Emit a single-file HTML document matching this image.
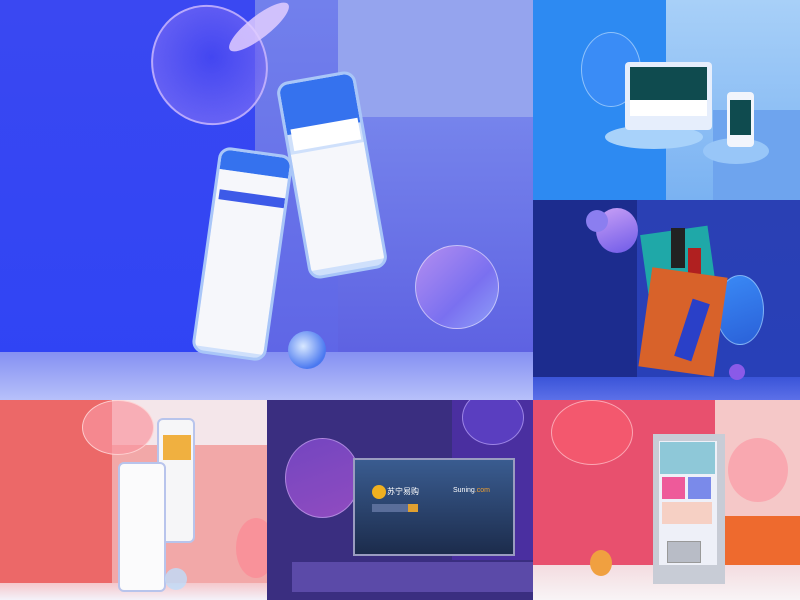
<!DOCTYPE html>
<html><head><meta charset="utf-8"><style>
*{margin:0;padding:0;box-sizing:border-box}
body{width:800px;height:600px;overflow:hidden;position:relative;font-family:"Liberation Sans","Noto Sans CJK SC",sans-serif;background:#fff}
div{position:absolute}
.p{overflow:hidden}
.disc{border-radius:50%}
</style></head><body>

<!-- Panel 1: top-left -->
<div class="p" style="left:0;top:0;width:533px;height:400px;background:linear-gradient(180deg,#3a48f2,#2f44f4)">
  <div style="left:255px;top:0;width:278px;height:352px;background:linear-gradient(180deg,#7280ec,#5f66e6)"></div>
  <div style="left:338px;top:0;width:195px;height:117px;background:#95a4ee"></div>
  <div style="left:338px;top:117px;width:195px;height:235px;background:linear-gradient(180deg,#7684ec,#5e62e2)"></div>
  <div style="left:0;top:352px;width:533px;height:48px;background:linear-gradient(180deg,#8590f2,#b7c0fa)"></div>
  <div class="disc" style="left:152px;top:4px;width:115px;height:122px;background:radial-gradient(circle at 55% 45%,rgba(70,70,240,.8),rgba(140,120,245,.6) 80%);border:2px solid rgba(220,200,255,.7);transform:rotate(-30deg)"></div>
  <div class="disc" style="left:222px;top:16px;width:74px;height:22px;background:rgba(225,205,255,.85);transform:rotate(-38deg)"></div>
  <div class="disc" style="left:415px;top:245px;width:84px;height:84px;background:linear-gradient(135deg,#b48ef0,#7a70f0 60%,#8fa0f8);border:1px solid rgba(255,255,255,.5)"></div>
  <div class="disc" style="left:288px;top:331px;width:38px;height:38px;background:radial-gradient(circle at 40% 40%,#d8e8ff,#4a78f0 70%);"></div>
  <!-- phone 2 -->
  <div style="left:292px;top:75px;width:80px;height:200px;background:#cfe0fb;border-radius:12px;transform:rotate(-10deg);border:3px solid #a9c6f8;overflow:hidden">
    <div style="left:0;top:0;width:100%;height:50px;background:#3572ee"></div>
    <div style="left:4px;top:45px;width:68px;height:22px;background:#fff"></div>
    <div style="left:0;top:70px;width:100%;height:118px;background:#f6f7fb"></div>
  </div>
  <!-- phone 1 -->
  <div style="left:205px;top:150px;width:75px;height:208px;background:#cfe0fb;border-radius:12px;transform:rotate(8deg);border:3px solid #a9c6f8;overflow:hidden">
    <div style="left:0;top:0;width:100%;height:20px;background:#3572ee"></div>
    <div style="left:0;top:20px;width:100%;height:178px;background:#f6f7fb"></div>
    <div style="left:3px;top:40px;width:66px;height:10px;background:#3d5ae8"></div>
  </div>
</div>

<!-- Panel 2: top-right upper -->
<div class="p" style="left:533px;top:0;width:267px;height:200px;background:#2d8af2">
  <div style="left:133px;top:0;width:134px;height:200px;background:linear-gradient(180deg,#a8d0f8,#7ab2f2)"></div>
  <div style="left:180px;top:110px;width:87px;height:90px;background:#6ea4ee"></div>
  <div class="disc" style="left:48px;top:32px;width:60px;height:75px;background:#3a8cf6;border:1px solid rgba(200,230,255,.6)"></div>
  <div class="disc" style="left:72px;top:125px;width:98px;height:24px;background:#a8d2fa"></div>
  <div class="disc" style="left:170px;top:138px;width:66px;height:26px;background:#98c6f8"></div>
  <div style="left:92px;top:62px;width:87px;height:68px;background:#e6eefc;border-radius:4px"></div>
  <div style="left:97px;top:67px;width:77px;height:40px;background:#0f4b4f"></div>
  <div style="left:97px;top:100px;width:77px;height:16px;background:#fff"></div>
  <div style="left:194px;top:92px;width:27px;height:55px;background:#f2f5fc;border-radius:4px"></div>
  <div style="left:197px;top:100px;width:21px;height:35px;background:#0f4b4f"></div>
</div>

<!-- Panel 3: top-right lower -->
<div class="p" style="left:533px;top:200px;width:267px;height:200px;background:#1c2c8e">
  <div style="left:104px;top:0;width:163px;height:178px;background:linear-gradient(180deg,#2a40b4,#2840b8)"></div>
  <div style="left:0;top:177px;width:267px;height:23px;background:linear-gradient(180deg,#3a54d8,#5c70e8)"></div>
  <div class="disc" style="left:183px;top:75px;width:48px;height:70px;background:linear-gradient(160deg,#3a8af6,#2a60d8);border:1px solid rgba(180,220,255,.6)"></div>
  <div class="disc" style="left:63px;top:8px;width:42px;height:45px;background:linear-gradient(160deg,#c9a0f6,#6e5ae8)"></div>
  <div class="disc" style="left:53px;top:10px;width:22px;height:22px;background:#8b7ef0"></div>
  <div style="left:112px;top:30px;width:68px;height:75px;background:#1fa8a8;transform:rotate(-8deg)"></div>
  <div style="left:138px;top:28px;width:14px;height:40px;background:#222"></div>
  <div style="left:155px;top:48px;width:13px;height:30px;background:#b02020"></div>
  <div style="left:112px;top:72px;width:76px;height:100px;background:#d8622a;transform:rotate(8deg)"></div>
  <div style="left:150px;top:100px;width:18px;height:60px;background:#2a40c8;transform:rotate(18deg)"></div>
  <div class="disc" style="left:196px;top:164px;width:16px;height:16px;background:#8a5ae8"></div>
</div>

<!-- Panel 4: bottom-left -->
<div class="p" style="left:0;top:400px;width:267px;height:200px;background:#ec6868">
  <div style="left:112px;top:0;width:155px;height:45px;background:#f4e6ea"></div>
  <div style="left:112px;top:45px;width:155px;height:140px;background:#f2a8a8"></div>
  <div style="left:0;top:183px;width:267px;height:17px;background:linear-gradient(180deg,#f5c8cc,#f4f2fa)"></div>
  <div class="disc" style="left:82px;top:0;width:72px;height:55px;background:rgba(250,150,160,.7);border:1px solid rgba(255,220,220,.8)"></div>
  <div class="disc" style="left:236px;top:118px;width:40px;height:60px;background:rgba(250,140,150,.8)"></div>
  <div style="left:157px;top:18px;width:38px;height:125px;background:#f6f6f8;border:2px solid #b8c4ec;border-radius:6px"></div>
  <div style="left:163px;top:35px;width:28px;height:25px;background:#f0b040"></div>
  <div style="left:118px;top:62px;width:48px;height:130px;background:#fbfbfc;border:2px solid #b8c4ec;border-radius:6px"></div>
  <div class="disc" style="left:165px;top:168px;width:22px;height:22px;background:rgba(190,220,250,.8)"></div>
</div>

<!-- Panel 5: bottom-middle -->
<div class="p" style="left:267px;top:400px;width:266px;height:200px;background:#3a2e80">
  <div style="left:185px;top:0;width:81px;height:160px;background:#4a2fa0"></div>
  <div class="disc" style="left:195px;top:-10px;width:62px;height:55px;background:#5a3ec0;border:1px solid rgba(200,180,255,.6)"></div>
  <div class="disc" style="left:18px;top:38px;width:75px;height:80px;background:linear-gradient(160deg,#7a48c8,#9a50c8);border:1px solid rgba(220,190,255,.6);opacity:.9"></div>
  <div style="left:25px;top:162px;width:241px;height:30px;background:#5b4aa8"></div>
  <div style="left:86px;top:58px;width:162px;height:98px;background:#9a9cc0;padding:2px">
    <div style="position:relative;width:100%;height:100%;background:linear-gradient(180deg,#3a5c90,#1c2c4c)"></div>
  </div>
  <div style="left:105px;top:85px;width:14px;height:14px;background:#f0b020;border-radius:50%"></div>
  <div style="left:120px;top:86px;font-size:8px;color:#fff">苏宁易购</div>
  <div style="left:105px;top:104px;width:36px;height:8px;background:#5a6e9a"></div>
  <div style="left:141px;top:104px;width:10px;height:8px;background:#e0a030"></div>
  <div style="left:186px;top:87px;font-size:7px;color:#fff">Suning<span style="color:#f0a030">.com</span></div>
</div>

<!-- Panel 6: bottom-right -->
<div class="p" style="left:533px;top:400px;width:267px;height:200px;background:#e8506e">
  <div style="left:182px;top:0;width:85px;height:175px;background:#f5c8c8"></div>
  <div style="left:192px;top:116px;width:75px;height:55px;background:#ee6a2e"></div>
  <div style="left:0;top:165px;width:267px;height:35px;background:linear-gradient(180deg,#f4dce0,#f8f4f6)"></div>
  <div class="disc" style="left:18px;top:0;width:82px;height:65px;background:rgba(245,90,110,.8);border:1px solid rgba(255,200,210,.7)"></div>
  <div class="disc" style="left:195px;top:38px;width:60px;height:64px;background:rgba(250,160,170,.8)"></div>
  <div class="disc" style="left:57px;top:150px;width:22px;height:26px;background:#f0a040"></div>
  <div style="left:120px;top:34px;width:72px;height:150px;background:#c8ccd6"></div>
  <div style="left:126px;top:41px;width:58px;height:124px;background:#eef0f8"></div>
  <div style="left:127px;top:42px;width:55px;height:32px;background:#8ec8d8"></div>
  <div style="left:129px;top:77px;width:23px;height:22px;background:#ee5a9a"></div>
  <div style="left:155px;top:77px;width:23px;height:22px;background:#7a8aea"></div>
  <div style="left:129px;top:102px;width:50px;height:22px;background:#f6d0c4"></div>
  <div style="left:134px;top:141px;width:34px;height:22px;border:1px solid #999;background:#b8bcc6"></div>
</div>

</body></html>
